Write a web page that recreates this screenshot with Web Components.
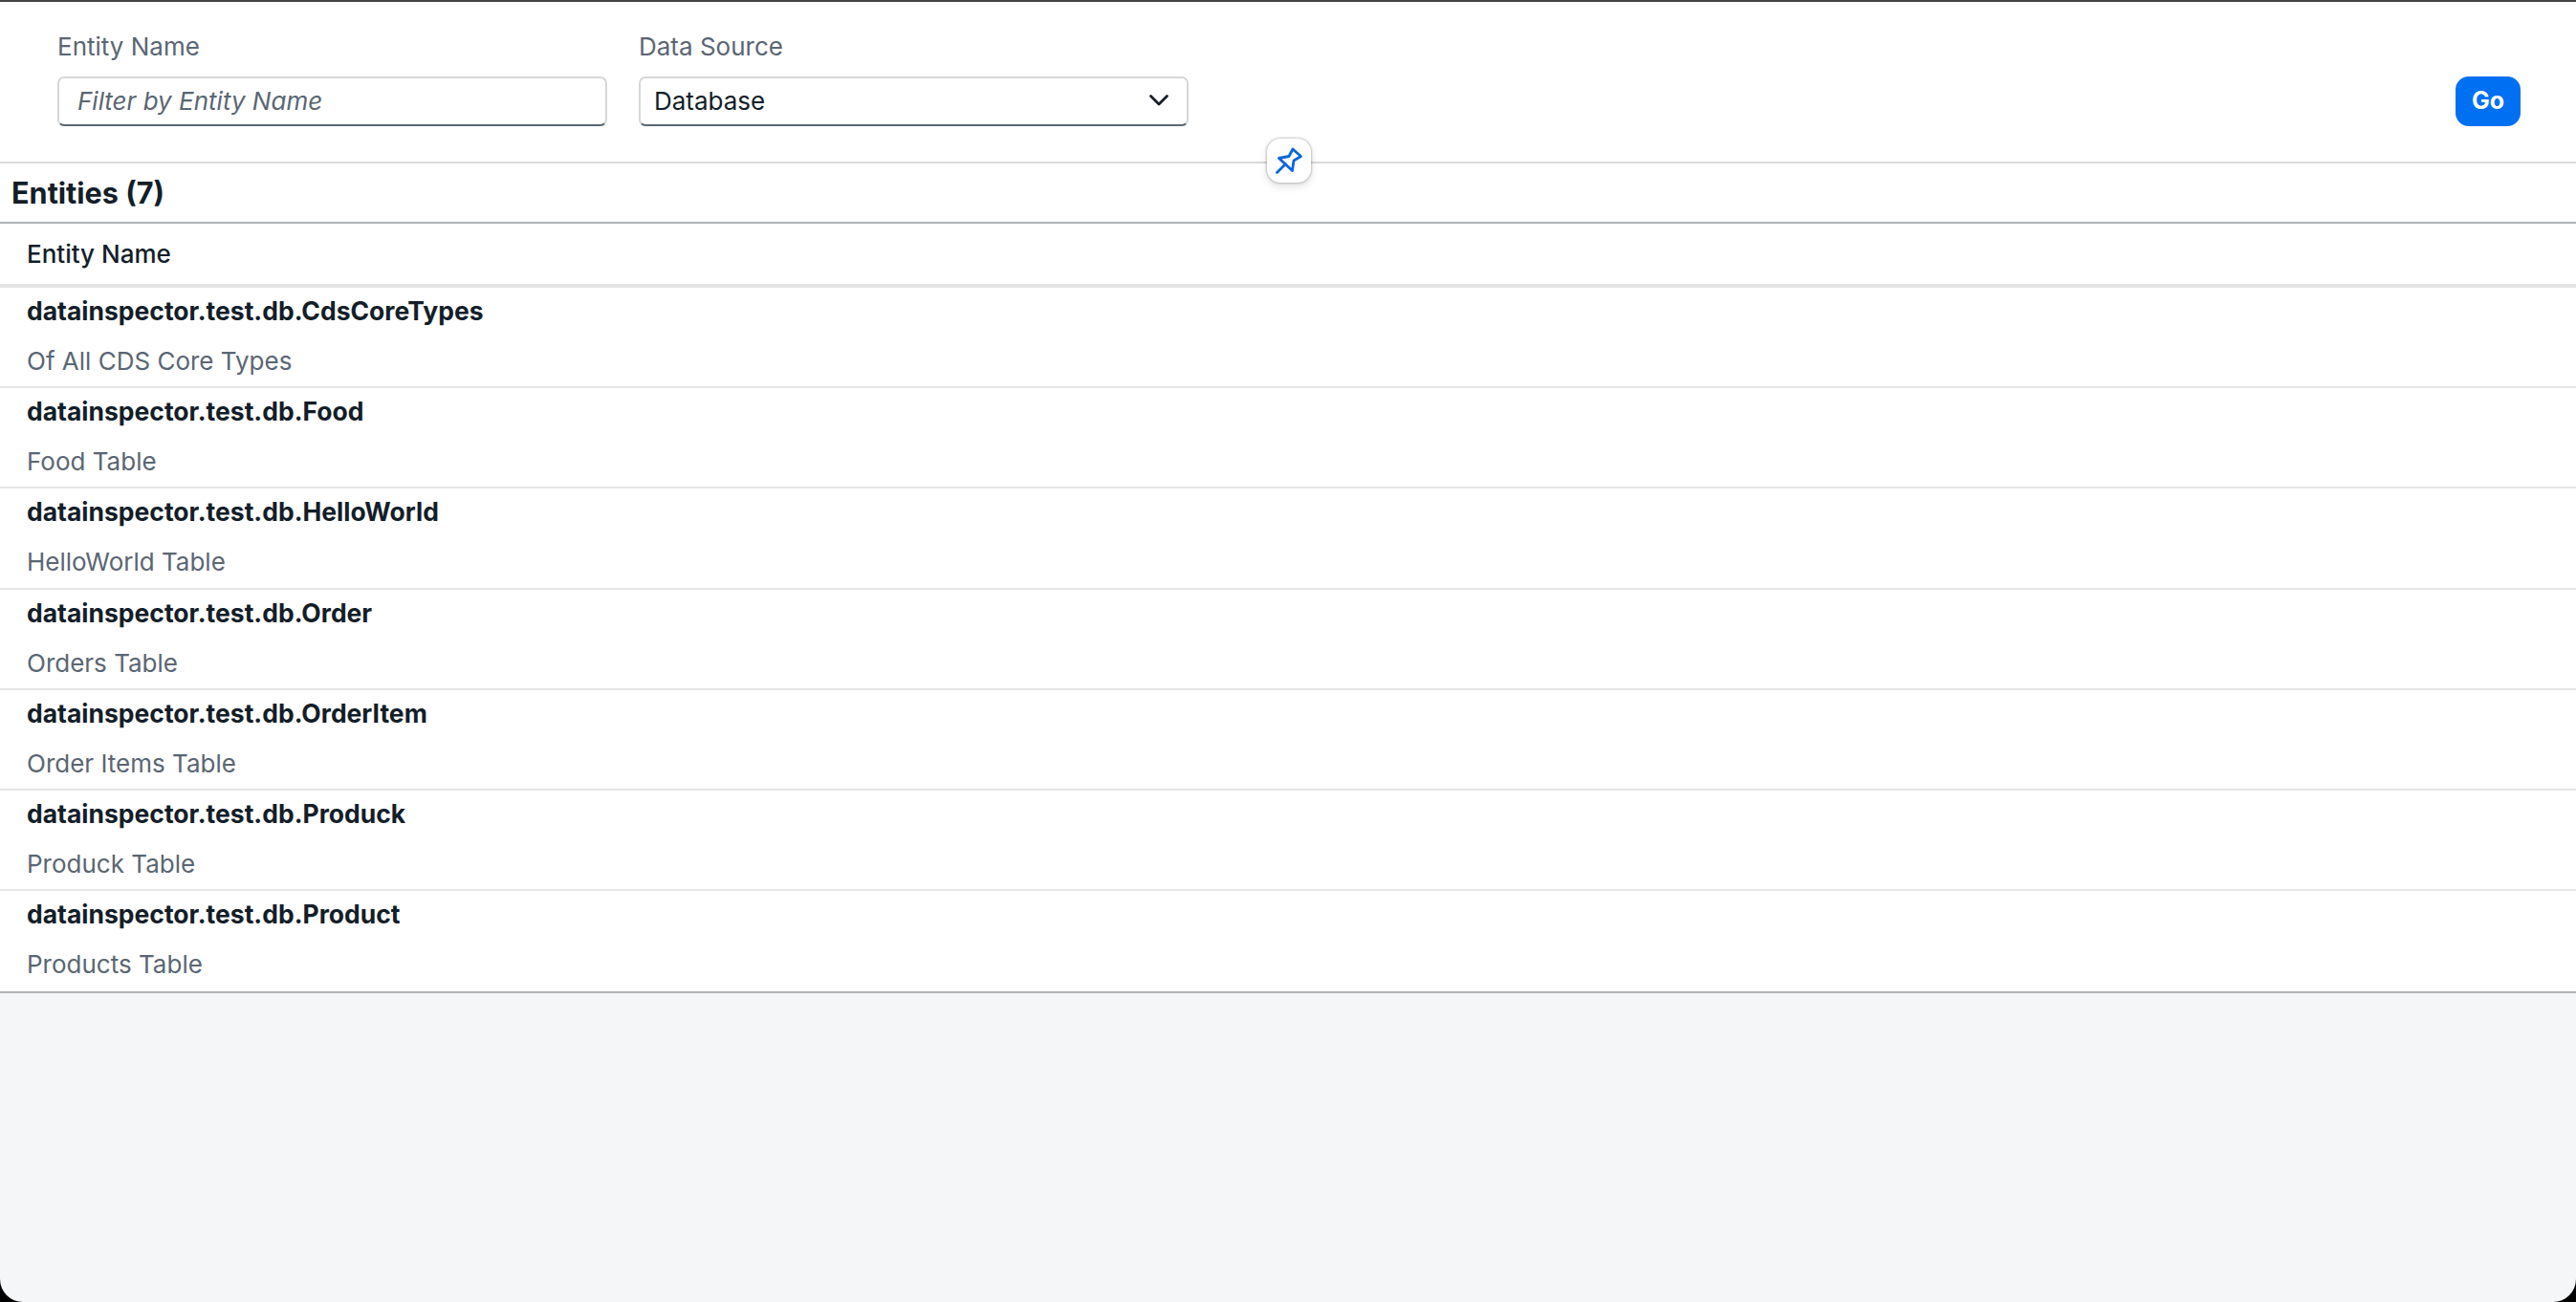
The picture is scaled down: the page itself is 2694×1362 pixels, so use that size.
<!DOCTYPE html>
<html>
<head>
<meta charset="utf-8">
<title>Entities</title>
<style>
  html, body { margin: 0; height: 100%; background: #000; }
  body { font-family: "Inter", "Liberation Sans", sans-serif; }
</style>
</head>
<body>
<app-window>
  <filter-bar>
    <filter-field slot="fields" label="Entity Name" placeholder="Filter by Entity Name"></filter-field>
    <filter-field slot="fields" label="Data Source" value="Database" select></filter-field>
  </filter-bar>
  <entity-table title-text="Entities (7)" column="Entity Name">
    <entity-row name="datainspector.test.db.CdsCoreTypes" description="Of All CDS Core Types"></entity-row>
    <entity-row name="datainspector.test.db.Food" description="Food Table"></entity-row>
    <entity-row name="datainspector.test.db.HelloWorld" description="HelloWorld Table"></entity-row>
    <entity-row name="datainspector.test.db.Order" description="Orders Table"></entity-row>
    <entity-row name="datainspector.test.db.OrderItem" description="Order Items Table"></entity-row>
    <entity-row name="datainspector.test.db.Produck" description="Produck Table"></entity-row>
    <entity-row name="datainspector.test.db.Product" description="Products Table"></entity-row>
  </entity-table>
</app-window>

<script>
const FONT = '"Inter", "Liberation Sans", sans-serif';
const COLOR_TEXT = "#131e29";
const COLOR_LABEL = "#5a6673";
const COLOR_BLUE = "#0070f2";
const COLOR_LINE = "#b0b3b5";

class AppWindow extends HTMLElement {
  constructor() {
    super();
    this.attachShadow({ mode: 'open' }).innerHTML = `
      <style>
        :host {
          display: flex; flex-direction: column; box-sizing: border-box;
          height: 1362px; overflow: hidden; background: #f5f6f7;
          border-top: 2px solid #444;
          border-radius: 0 0 24px 24px;
          font-family: ${FONT}; color: ${COLOR_TEXT};
        }
      </style>
      <slot></slot>
    `;
  }
}

class FilterBar extends HTMLElement {
  constructor() {
    super();
    this.attachShadow({ mode: 'open' }).innerHTML = `
      <style>
        :host {
          display: block; position: relative; background: #fff;
          border-bottom: 2px solid #d9d9d9;
        }
        .bar {
          display: flex; justify-content: space-between; align-items: flex-end;
          height: 167px; box-sizing: border-box; padding: 0 58px 37px 60px;
        }
        .fields { display: flex; gap: 33px; }
        button {
          width: 68px; height: 52px; border: 0; border-radius: 14px;
          background: ${COLOR_BLUE}; color: #fff;
          font: 700 25px ${FONT}; padding: 0 0 2px;
        }
        .pin {
          position: absolute; left: 1325px; top: 143px;
          width: 46px; height: 46px; box-sizing: border-box;
          display: flex; align-items: center; justify-content: center;
          background: #fff; border-radius: 14px;
          box-shadow: 0 0 3px rgba(0,0,0,.4), 0 4px 8px rgba(0,0,0,.12);
        }
        svg { display: block; }
      </style>
      <div class="bar">
        <div class="fields"><slot name="fields"></slot></div>
        <button>Go</button>
      </div>
      <div class="pin">
        <svg width="30" height="30" viewBox="0 0 30 30" fill="none" stroke="#0b66dc" stroke-width="2.8" stroke-linejoin="round" stroke-linecap="round">
          <path d="M2.5 27.5 L11.5 18.5 M4.5 12.5 L15 10.5 L19 3 L27.5 10.5 L20 15 L18.5 25.5 Z"/>
        </svg>
      </div>
    `;
  }
}

class FilterField extends HTMLElement {
  constructor() {
    super();
    const isSelect = this.hasAttribute('select');
    const value = this.getAttribute('value') || '';
    const placeholder = this.getAttribute('placeholder') || '';
    this.attachShadow({ mode: 'open' }).innerHTML = `
      <style>
        :host { display: block; width: 575px; }
        label { display: block; font-size: 26px; line-height: 32px; color: ${COLOR_LABEL}; margin-bottom: 15px; }
        .box {
          display: flex; align-items: center; justify-content: space-between;
          height: 52px; box-sizing: border-box; padding: 0 18px 2px ${isSelect ? 14 : 19}px;
          background: #fff; border: 2px solid #d5d7d9; border-bottom-color: ${COLOR_LABEL};
          border-radius: 7px; font-size: 26px;
        }
        .ph { font-style: italic; color: ${COLOR_LABEL}; }
        svg { display: block; }
      </style>
      <label></label>
      <div class="box">
        ${isSelect
          ? `<span class="val"></span><svg width="22" height="14" viewBox="0 0 22 14" fill="none" stroke="${COLOR_TEXT}" stroke-width="2.8" stroke-linecap="round" stroke-linejoin="round"><path d="M2.5 2.5 L11 11 L19.5 2.5"/></svg>`
          : `<span class="ph"></span>`}
      </div>
    `;
    this.shadowRoot.querySelector('label').textContent = this.getAttribute('label');
    const span = this.shadowRoot.querySelector('span');
    span.textContent = isSelect ? value : placeholder;
  }
}

class EntityTable extends HTMLElement {
  constructor() {
    super();
    this.attachShadow({ mode: 'open' }).innerHTML = `
      <style>
        :host { display: block; background: #fff; border-bottom: 2px solid ${COLOR_LINE}; }
        .title {
          height: 63px; box-sizing: border-box; padding: 0 0 1px 12px;
          display: flex; align-items: center;
          font-size: 30.6px; font-weight: 700;
          border-bottom: 2px solid ${COLOR_LINE};
        }
        .head {
          height: 67px; box-sizing: border-box; padding-left: 28px;
          display: flex; align-items: center;
          font-size: 26px; font-weight: 500;
          border-bottom: 4px solid #e5e5e5;
        }
      </style>
      <div class="title"></div>
      <div class="head"></div>
      <slot></slot>
    `;
    this.shadowRoot.querySelector('.title').textContent = this.getAttribute('title-text');
    this.shadowRoot.querySelector('.head').textContent = this.getAttribute('column');
  }
}

class EntityRow extends HTMLElement {
  constructor() {
    super();
    this.attachShadow({ mode: 'open' }).innerHTML = `
      <style>
        :host {
          display: block; height: 105.2px; box-sizing: border-box;
          padding: 7px 28px 0; border-bottom: 2px solid #e5e5e5;
          font-size: 26px;
        }
        :host(:last-child) { border-bottom: 0; }
        .name { font-weight: 700; font-size: 26.5px; line-height: 34px; }
        .desc { color: ${COLOR_LABEL}; line-height: 34px; margin-top: 19px; }
      </style>
      <div class="name"></div>
      <div class="desc"></div>
    `;
    this.shadowRoot.querySelector('.name').textContent = this.getAttribute('name');
    this.shadowRoot.querySelector('.desc').textContent = this.getAttribute('description');
  }
}

customElements.define('app-window', AppWindow);
customElements.define('filter-bar', FilterBar);
customElements.define('filter-field', FilterField);
customElements.define('entity-table', EntityTable);
customElements.define('entity-row', EntityRow);
</script>
</body>
</html>
